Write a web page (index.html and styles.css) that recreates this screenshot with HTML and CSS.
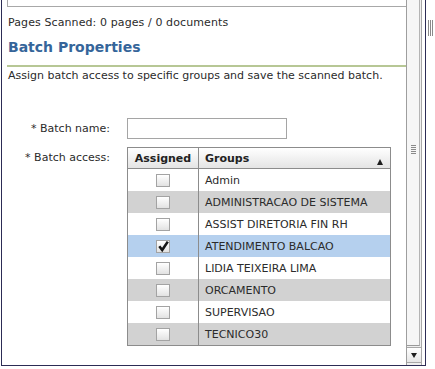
FILE: index.html
```html
<!DOCTYPE html>
<html lang="en">
<head>
    <meta charset="UTF-8">
    <meta name="viewport" content="width=device-width, initial-scale=1.0">
    <title>Batch Properties</title>
    <link rel="stylesheet" href="styles.css">
</head>
<body>
    <div class="page">
        <div class="frame">
            <div class="content">
                <div class="top-box"></div>
                <p class="status">Pages Scanned: 0 pages / 0 documents</p>
                <h2 class="title">Batch Properties</h2>
                <p class="desc">Assign batch access to specific groups and save the scanned batch.</p>

                <div class="form">
                    <label class="label" for="batchName">* Batch name:</label>
                    <input class="text-input" type="text" id="batchName">

                    <label class="label label-top">* Batch access:</label>
                    <table class="groups">
                        <thead>
                            <tr>
                                <th class="col-assigned">Assigned</th>
                                <th class="col-groups">Groups <span class="sort-up"></span></th>
                            </tr>
                        </thead>
                        <tbody>
                            <tr><td class="cell-check"><span class="check"></span></td><td class="cell-name">Admin</td></tr>
                            <tr class="alt"><td class="cell-check"><span class="check"></span></td><td class="cell-name">ADMINISTRACAO DE SISTEMA</td></tr>
                            <tr><td class="cell-check"><span class="check"></span></td><td class="cell-name">ASSIST DIRETORIA FIN RH</td></tr>
                            <tr class="selected"><td class="cell-check"><span class="check checked"><svg width="13" height="13" viewBox="0 0 13 13"><path d="M2.3 6.3 L5.2 10 L10.8 1.6" fill="none" stroke="#151515" stroke-width="2.6"/></svg></span></td><td class="cell-name">ATENDIMENTO BALCAO</td></tr>
                            <tr><td class="cell-check"><span class="check"></span></td><td class="cell-name">LIDIA TEIXEIRA LIMA</td></tr>
                            <tr class="alt"><td class="cell-check"><span class="check"></span></td><td class="cell-name">ORCAMENTO</td></tr>
                            <tr><td class="cell-check"><span class="check"></span></td><td class="cell-name">SUPERVISAO</td></tr>
                            <tr class="alt"><td class="cell-check"><span class="check"></span></td><td class="cell-name">TECNICO30</td></tr>
                        </tbody>
                    </table>
                </div>
            </div>

            <!-- fake scrollbar of the panel -->
            <div class="scrollbar">
                <div class="thumb"><span class="thumb-grip"></span></div>
                <div class="arrow-down"><span class="arrow-tri"></span></div>
            </div>
        </div>
        <div class="splitter"><span class="splitter-grip"></span></div>
    </div>
</body>
</html>
```

FILE: styles.css
```css
* {
    margin: 0;
    padding: 0;
    box-sizing: border-box;
}

body {
    font-family: "DejaVu Sans", Verdana, sans-serif;
    font-size: 11px;
    color: #2b2b2b;
    background-color: #fff;
}

.page {
    display: flex;
    width: 435px;
    height: 369px;
}

.frame {
    display: flex;
    width: 425px;
    height: 366px;
    margin-left: 1px;
    border-left: 1px solid #2c2c55;
    border-right: 1px solid #2c2c55;
    border-bottom: 1px solid #2c2c55;
    padding-right: 3px;
}

.content {
    flex: 1;
    padding-left: 5px;
}

.top-box {
    height: 7px;
    border: 1px solid #a8a8a8;
    border-top: none;
    border-right: none;
}

.status {
    margin-top: 9px;
    padding-left: 1px;
    line-height: 14px;
    letter-spacing: 0.1px;
}

.title {
    margin-top: 8px;
    padding-left: 1px;
    font-size: 14px;
    line-height: 18px;
    color: #35659a;
    padding-bottom: 9px;
    border-bottom: 2px solid #b7c795;
}

.desc {
    margin-top: 2px;
    padding-left: 1px;
    line-height: 14px;
}

.form {
    display: grid;
    grid-template-columns: 103px auto;
    column-gap: 17px;
    row-gap: 8px;
    margin-top: 35px;
    justify-items: start;
}

.label {
    justify-self: end;
    line-height: 21px;
}

.label-top {
    align-self: start;
}

.text-input {
    width: 160px;
    height: 21px;
    border: 1px solid #a5a5a5;
    background-color: #fff;
    font-family: inherit;
    font-size: 11px;
}

.groups {
    width: 264px;
    border: 1px solid #8c8c8c;
    border-spacing: 0;
}

.groups th {
    height: 21px;
    padding: 0;
    font-size: 11px;
    font-weight: bold;
    color: #222;
    background: linear-gradient(#ffffff, #e4e4e4);
    border-bottom: 1px solid #8c8c8c;
}

.col-assigned {
    width: 71px;
    border-right: 1px solid #8c8c8c;
    text-align: center;
}

.col-groups {
    text-align: left;
    padding-left: 6px !important;
}

.sort-up {
    float: right;
    margin-top: 7px;
    margin-right: 7px;
    width: 0;
    height: 0;
    border-left: 3px solid transparent;
    border-right: 3px solid transparent;
    border-bottom: 6px solid #1e1e1e;
}

.groups td {
    height: 22px;
    padding: 0;
}

.cell-check {
    border-right: 1px solid #8c8c8c;
    text-align: center;
}

.cell-name {
    padding-left: 6px !important;
    color: #2b2b2b;
}

.groups tr.alt td {
    background-color: #d2d2d2;
}

.groups tr.selected td {
    background-color: #b5d0ee;
}

.check {
    display: inline-block;
    width: 14px;
    height: 13px;
    vertical-align: middle;
    border: 1px solid #a3a3a3;
    background: linear-gradient(#ffffff, #e2e2e2);
}

.check svg {
    display: block;
    margin: -1px 0 0 0;
}

.scrollbar {
    display: flex;
    flex-direction: column;
    width: 16px;
    border-left: 1px solid #9e9e9e;
    border-right: 1px solid #a8a8a8;
    background-color: #efefef;
}

.thumb {
    height: 346px;
    display: flex;
    align-items: center;
    justify-content: center;
    background-color: #f6f6f6;
    border-right: 1px solid #b4b4b4;
    border-bottom: 1px solid #9a9a9a;
    margin-right: 1px;
}

.thumb-grip {
    width: 5px;
    height: 9px;
    margin-top: -46px;
    background: repeating-linear-gradient(#8a8a8a 0, #8a8a8a 1px, transparent 1px, transparent 2px);
}

.arrow-down {
    height: 16px;
    margin-top: 1px;
    display: flex;
    align-items: center;
    justify-content: center;
    background: linear-gradient(#ffffff, #e6e6e6);
    border-top: 1px solid #a8a8a8;
    border-bottom: 1px solid #a8a8a8;
}

.arrow-tri {
    width: 0;
    height: 0;
    border-left: 3px solid transparent;
    border-right: 3px solid transparent;
    border-top: 5px solid #1e1e1e;
}

.splitter {
    flex: 1;
    padding-top: 20px;
    padding-left: 2px;
}

.splitter-grip {
    display: block;
    width: 5px;
    height: 16px;
    background: repeating-linear-gradient(90deg, #8a8a8a 0, #8a8a8a 1px, transparent 1px, transparent 2px);
}
```
